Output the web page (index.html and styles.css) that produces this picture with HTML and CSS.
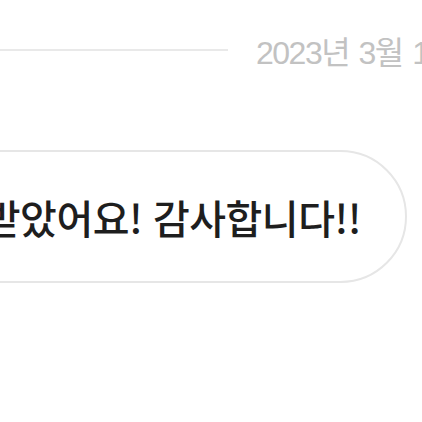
FILE: index.html
```html
<!DOCTYPE html>
<html lang="ko">
<head>
<meta charset="utf-8">
<link rel="stylesheet" href="styles.css">
</head>
<body>
<div class="page">
  <div class="date-row">
    <div class="rule"></div>
    <div class="date">2023년 3월 15일</div>
  </div>
  <div class="msg-row">
    <div class="bubble">잘 받았어요! 감사합니다!!</div>
  </div>
</div>
</body>
</html>
```
FILE: styles.css
```css
html, body {
  margin: 0;
  padding: 0;
  background: #ffffff;
  width: 422px;
  height: 422px;
  overflow: hidden;
}
.page {
  width: 422px;
  height: 422px;
  overflow: hidden;
  font-family: "Noto Sans CJK KR", "Noto Sans", sans-serif;
  padding-top: 30px;
  box-sizing: border-box;
}
.date-row {
  display: flex;
  align-items: center;
  gap: 28px;
  height: 40px;
  white-space: nowrap;
}
.rule {
  flex: 0 0 228px;
  height: 2px;
  background: #e9e9e9;
}
.date {
  font-family: "Liberation Sans", "Noto Sans CJK KR", sans-serif;
  font-size: 32px;
  color: #c2c2c2;
  flex: 0 0 auto;
  letter-spacing: -1.5px;
  word-spacing: 2px;
}
.msg-row {
  display: flex;
  justify-content: flex-end;
  padding-right: 15px;
  margin-top: 80px;
}
.bubble {
  flex: 0 0 auto;
  white-space: nowrap;
  height: 133px;
  box-sizing: border-box;
  border: 2px solid #e6e6e6;
  border-radius: 67px;
  display: flex;
  align-items: center;
  padding: 0 44px 0 40px;
  font-size: 40px;
  font-weight: 500;
  letter-spacing: -0.5px;
  color: #1e1e1e;
}
```
